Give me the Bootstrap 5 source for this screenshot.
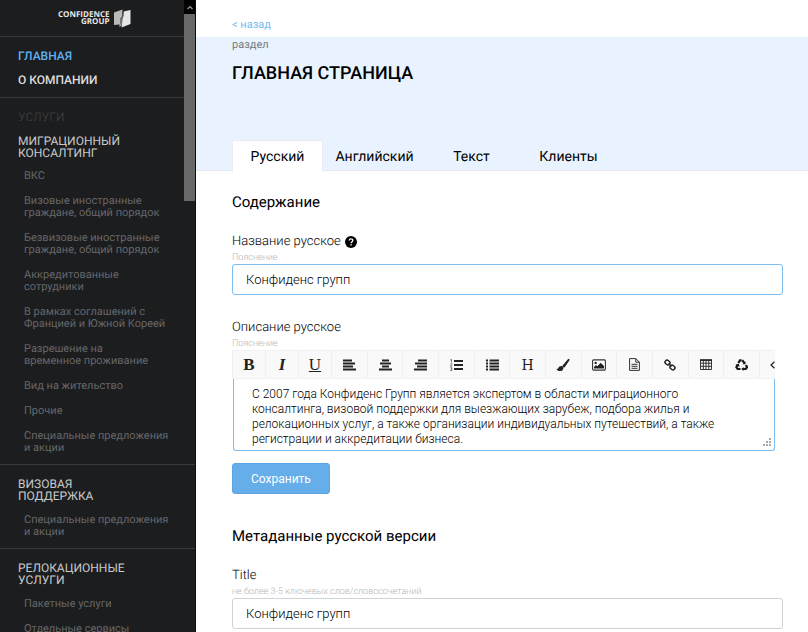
<!DOCTYPE html>
<html lang="ru">
<head>
<meta charset="utf-8">
<meta name="viewport" content="width=device-width, initial-scale=1">
<title>Confidence Group</title>
<link href="https://cdn.jsdelivr.net/npm/bootstrap@5.3.0/dist/css/bootstrap.min.css" rel="stylesheet">
<style>
body { font-family: Roboto, sans-serif; color: #2b2b2b; font-size: 13px; line-height: 16px; text-rendering: geometricPrecision; }
a { text-decoration: none; }
.side { width: 196px; background: #1c1d1f; border-right: 1px solid #0c0c0d; }
.brand { height: 37px; padding-left: 58px; color: #fff; }
.brand-name { font: 700 8px/7px "Open Sans", sans-serif; color: #e8e8e8; }
.rule { border-bottom: 1px solid #38393b; }
.group-top { padding: 7px 18px 5px; }
.group-top a { color: #dcdcdc; font-size: 12px; font-weight: 500; line-height: 24px; }
.group-top a.active { color: #5fb0f2; }
.group { padding: 13px 18px 10px; }
.group-label { color: #37383a; line-height: 12px; margin-bottom: 12px; font-size: 12px; }
.group-title { color: #c9c9c9; font-size: 12px; line-height: 12px; margin: 0 0 12px; font-weight: 400; }
.group-first .group-title { margin-bottom: 11px; }
.group ul { margin: 0 -12px 0 6px; display: grid; row-gap: 13px; }
.group ul a { color: #666769; font-size: 11px; line-height: 12px; display: block; }
.scroller { width: 11px; height: 201px; background: #686868; }
.scroller-up { height: 14px; background: #000; }
.back { height: 37px; padding-top: 17px; }
.back a { color: #73bdf0; font-size: 11px; }
.inset { padding-left: 36px; padding-right: 25px; }
.band { background: #e8f3ff; height: 134px; border-bottom: 1px solid #e4e7f0; }
.section-name { color: #75797e; font-size: 11px; line-height: 16px; }
h1 { font-size: 18px; line-height: 24px; color: #000; margin: 9px 0 0; }
.block-title { font-size: 15px; line-height: 20px; color: #000; font-weight: 400; margin: 0 0 22px; padding-top: 21px; }
.block-next { padding-top: 32px; }
.tabs { gap: 6px; margin-bottom: -1px; border: 0; }
.tabs .nav-link { width: 91px; height: 32px; padding: 1px 0 0; border: 1px solid transparent; border-radius: 0; color: #000; font-size: 14px; }
.tabs .nav-link.active { background: #fff; border-color: #e9edf2 #e9edf2 #fff; color: #000; }
.field-label { font-size: 13px; line-height: 16px; font-weight: 300; color: #000; }
.field-next { margin-top: 25px; }
.hint { font-size: 9px; line-height: 12px; font-weight: 300; color: #b4b4b4; margin: 2px 0 0; }
.box { font-size: 13px; line-height: 16px; font-weight: 300; color: #000; height: 31px; padding: 6px 13px; border-radius: 3px; border-color: #d0d3d6; }
.box-on { border-color: #7cbdf2; }
.editor { margin-right: 8px; }
.tools { background: #f9f9f9; height: 29px; border: 1px solid #f1f1f1; border-right: 0; }
.tools button { flex: 1 1 0; min-width: 0; padding: 0; border: 0; border-right: 1px solid #f0f0f0; background: none; color: #222; display: flex; align-items: center; justify-content: center; }
.tools .glyph { flex: none; width: 33px; font: 17px/16px "Liberation Serif", serif; }
.tools .slab { font-family: "DejaVu Serif", serif; font-size: 14px; }
.tools .last { flex: none; width: 15px; border: 0; justify-content: flex-end; }
.area { display: block; margin-left: 1px; width: calc(100% - 1px); height: 72px; font-size: 12px; line-height: 15px; font-weight: 300; color: #000; padding: 8px 40px 2px 18px; border-radius: 0 0 3px 3px; border: 1px solid #7cbdf2; border-top: 0; resize: none; overflow: hidden; }
.grip { right: 4px; bottom: 5px; }
.save { background: #66aeea; color: #fff; font-size: 12px; line-height: 16px; height: 31px; margin-top: 12px; padding: 6px 18px; border-radius: 3px; border-color: #5ba5e3; }
</style>
<script src="https://cdn.jsdelivr.net/npm/bootstrap@5.3.0/dist/js/bootstrap.bundle.min.js"></script>
</head>
<body class="vh-100 overflow-hidden bg-white">
<div class="d-flex vh-100">
  <aside class="side flex-shrink-0 position-relative overflow-hidden">
    <div class="brand rule d-flex align-items-center">
      <div class="brand-name text-end">CONFIDENCE<br>GROUP</div>
      <svg class="ms-1" width="17" height="19" viewBox="0 0 17 19" aria-hidden="true">
        <path d="M0 3.500 8.500.5v14L5.500 18.500v-3L0 16z" fill="#b9b9b9"/>
        <path d="M9.500 2.500 16.500 1v14l-9 3.500 1-7z" fill="#e6e6e6"/>
        <path d="M9 2v5.500L7 9v6.500" fill="none" stroke="#333" stroke-width="1"/>
      </svg>
    </div>
    <nav>
      <div class="group-top rule d-flex flex-column">
        <a class="active" href="#">ГЛАВНАЯ</a>
        <a href="#">О КОМПАНИИ</a>
      </div>
      <div class="group group-first rule">
        <div class="group-label">УСЛУГИ</div>
        <h3 class="group-title">МИГРАЦИОННЫЙ<br>КОНСАЛТИНГ</h3>
        <ul class="list-unstyled">
          <li><a href="#">ВКС</a></li>
          <li><a href="#">Визовые иностранные<br>граждане, общий порядок</a></li>
          <li><a href="#">Безвизовые иностранные<br>граждане, общий порядок</a></li>
          <li><a href="#">Аккредитованные<br>сотрудники</a></li>
          <li><a href="#">В рамках соглашений с<br>Францией и Южной Кореей</a></li>
          <li><a href="#">Разрешение на<br>временное проживание</a></li>
          <li><a href="#">Вид на жительство</a></li>
          <li><a href="#">Прочие</a></li>
          <li><a href="#">Специальные предложения<br>и акции</a></li>
        </ul>
      </div>
      <div class="group rule">
        <h3 class="group-title">ВИЗОВАЯ<br>ПОДДЕРЖКА</h3>
        <ul class="list-unstyled">
          <li><a href="#">Специальные предложения<br>и акции</a></li>
        </ul>
      </div>
      <div class="group">
        <h3 class="group-title">РЕЛОКАЦИОННЫЕ<br>УСЛУГИ</h3>
        <ul class="list-unstyled">
          <li><a href="#">Пакетные услуги</a></li>
          <li><a href="#">Отдельные сервисы</a></li>
        </ul>
      </div>
    </nav>
    <div class="scroller position-absolute top-0 end-0">
      <div class="scroller-up d-flex align-items-center justify-content-center">
        <svg width="6" height="5" viewBox="0 0 6 5" aria-hidden="true"><path d="M.5 4 3 1.500 5.500 4" fill="none" stroke="#999" stroke-width="1.200"/></svg>
      </div>
    </div>
  </aside>

  <main class="flex-grow-1 overflow-hidden">
    <div class="back inset"><a class="d-block" href="#">&lt; назад</a></div>
    <header class="band inset d-flex flex-column">
      <div class="section-name">раздел</div>
      <h1>ГЛАВНАЯ СТРАНИЦА</h1>
      <ul class="tabs nav nav-tabs flex-nowrap mt-auto">
        <li class="nav-item"><a class="nav-link active d-flex align-items-center justify-content-center" href="#">Русский</a></li>
        <li class="nav-item"><a class="nav-link d-flex align-items-center justify-content-center" href="#">Английский</a></li>
        <li class="nav-item"><a class="nav-link d-flex align-items-center justify-content-center" href="#">Текст</a></li>
        <li class="nav-item"><a class="nav-link d-flex align-items-center justify-content-center" href="#">Клиенты</a></li>
      </ul>
    </header>

    <form class="inset">
      <h2 class="block-title">Содержание</h2>
      <div>
        <div class="d-flex align-items-center gap-1">
          <label class="field-label" for="name">Название русское</label>
          <svg width="12" height="12" viewBox="0 0 12 12" aria-hidden="true"><circle cx="6" cy="6" r="6" fill="#000"/><path d="M4.200 4.600C4.200 2.300 7.800 2.300 7.800 4.500 7.800 5.800 6.100 5.700 6.100 7.200" fill="none" stroke="#fff" stroke-width="1.300"/><path d="M5.400 8.200h1.400v1.400H5.400z" fill="#fff"/></svg>
        </div>
        <div class="hint">Пояснение</div>
        <input class="form-control box box-on" id="name" type="text" value="Конфиденс групп">
      </div>
      <div class="field-next">
        <label class="field-label d-block" for="about">Описание русское</label>
        <div class="hint">Пояснение</div>
        <div class="editor position-relative">
          <div class="tools d-flex overflow-hidden">
            <button type="button" class="glyph fw-bold" aria-label="Полужирный">B</button>
            <button type="button" class="glyph fw-bold fst-italic" aria-label="Курсив">I</button>
            <button type="button" class="glyph text-decoration-underline" aria-label="Подчёркнутый">U</button>
            <button type="button" aria-label="По левому краю"><svg width="13" height="12" viewBox="0 0 13 12"><path d="M0 1.500h9M0 4.500h12M0 7.500h10M0 10.500h13" stroke="#222" stroke-width="2"/></svg></button>
            <button type="button" aria-label="По центру"><svg width="13" height="12" viewBox="0 0 13 12"><path d="M3 1.500h7M1 4.500h11M3 7.500h7M0 10.500h13" stroke="#222" stroke-width="2"/></svg></button>
            <button type="button" aria-label="По правому краю"><svg width="13" height="12" viewBox="0 0 13 12"><path d="M4 1.500h9M1 4.500h12M3 7.500h10M0 10.500h13" stroke="#222" stroke-width="2"/></svg></button>
            <button type="button" aria-label="Нумерованный список"><svg width="13" height="12" viewBox="0 0 13 12"><path d="M4 2h9M4 6h9M4 10h9" stroke="#222" stroke-width="1.800"/><path d="M.3 1 1.500.4V3.500M.3 4.800h1.500v.8L.5 7.200h1.600M.3 8.700h1.500v2.800H.3M.8 10h1" fill="none" stroke="#444" stroke-width=".7"/></svg></button>
            <button type="button" aria-label="Маркированный список"><svg width="13" height="12" viewBox="0 0 13 12"><path d="M0 1.500h2M0 4.500h2M0 7.500h2M0 10.500h2M3.500 1.500H13M3.500 4.500H13M3.500 7.500H13M3.500 10.500H13" stroke="#222" stroke-width="1.800"/></svg></button>
            <button type="button" class="slab" aria-label="Заголовок">H</button>
            <button type="button" aria-label="Кисть"><svg width="14" height="14" viewBox="0 0 14 14"><path d="M12.800.9c.9.200 1 .9.500 1.700L8.900 8.900c-.5.600-1.300.7-1.900.2s-.7-1.200-.2-1.800L11.700 1.400c.4-.4.700-.6 1.100-.5z" fill="#222"/><path d="M5.600 8c1 .1 1.900 1.100 1.800 2.200C7.100 12.600 4.900 13.400 2.700 13 1.400 12.700.6 11.800.4 10.600c.8.600 1.500.4 1.900-.5C2.900 8.600 4.200 7.800 5.600 8z" fill="#222"/></svg></button>
            <button type="button" aria-label="Изображение"><svg width="14" height="12" viewBox="0 0 14 12"><rect x=".6" y=".9" width="12.800" height="10.200" rx="1" fill="#fff" stroke="#333" stroke-width="1.100"/><circle cx="3.700" cy="3.900" r="1.200" fill="#222"/><path d="M2 9.500V8l2-2 1.300 1.200L8.700 3.800 12 7v2.500z" fill="#222"/></svg></button>
            <button type="button" aria-label="Файл"><svg width="11" height="13" viewBox="0 0 11 13"><path d="M.6.600h6.200l3.600 3.600v8.200H.6zM6.800.6v3.600h3.600M2.500 6.300h6M2.500 8.300h6M2.500 10.300h6" fill="none" stroke="#333" stroke-width="1"/></svg></button>
            <button type="button" aria-label="Ссылка"><svg width="12" height="12" viewBox="0 0 12 12" fill="none" stroke="#222" stroke-width="1.500"><rect x="1" y="1.500" width="5" height="4" rx="1.700" transform="rotate(40 3.500 3.500)"/><rect x="6" y="6.500" width="5" height="4" rx="1.700" transform="rotate(40 8.500 8.500)"/><path d="m4.500 4.500 3 3"/></svg></button>
            <button type="button" aria-label="Таблица"><svg width="12" height="11" viewBox="0 0 12 11"><path d="M.5 1h11v9.500H.5zM.5 4.200h11M.5 7.300h11M3.300 1v9.500M6 1v9.500M8.800 1v9.500" fill="none" stroke="#222" stroke-width=".9"/><path d="M0 .3h12v1.600H0z" fill="#222"/></svg></button>
            <button type="button" aria-label="Очистить"><svg width="13" height="12" viewBox="0 0 13 12" fill="none" stroke="#1a1a1a" stroke-width="2.200"><path d="M3.300 4 5 1.400h1.600"/><path d="M7.300 1.200 9.300 4.200"/><path d="M11 6l1 2.200L10.800 10H8"/><path d="M5.500 10H2.600L1.400 8.200 2.400 6.200"/><path d="M10.500 2.300v3H7.500zM8.500 8v4L6.300 10zM.3 5.500l3.600-.8.600 3.200z" fill="#1a1a1a" stroke="none"/></svg></button>
            <button type="button" class="last" aria-label="Ещё"><svg width="6" height="8" viewBox="0 0 6 8"><path d="M5.500.8 2 4l3.500 3.200" fill="none" stroke="#222" stroke-width="1.200"/></svg></button>
          </div>
          <textarea class="area" id="about">С 2007 года Конфиденс Групп является экспертом в области миграционного консалтинга, визовой поддержки для выезжающих зарубеж, подбора жилья и релокационных услуг, а также организации индивидуальных путешествий, а также регистрации и аккредитации бизнеса.</textarea>
          <svg class="grip position-absolute" width="8" height="8" viewBox="0 0 8 8" aria-hidden="true"><path d="M6 0h2v2H6zM6 3h2v2H6zM6 6h2v2H6zM3 3h2v2H3zM3 6h2v2H3zM0 6h2v2H0z" fill="#aaa"/></svg>
        </div>
      </div>
      <button type="submit" class="btn save">Сохранить</button>
      <h2 class="block-title block-next">Метаданные русской версии</h2>
      <div>
        <label class="field-label d-block" for="title">Title</label>
        <div class="hint">не более 3-5 ключевых слов/словосочетаний</div>
        <input class="form-control box" id="title" type="text" value="Конфиденс групп">
      </div>
    </form>
  </main>
</div>
</body>
</html>
